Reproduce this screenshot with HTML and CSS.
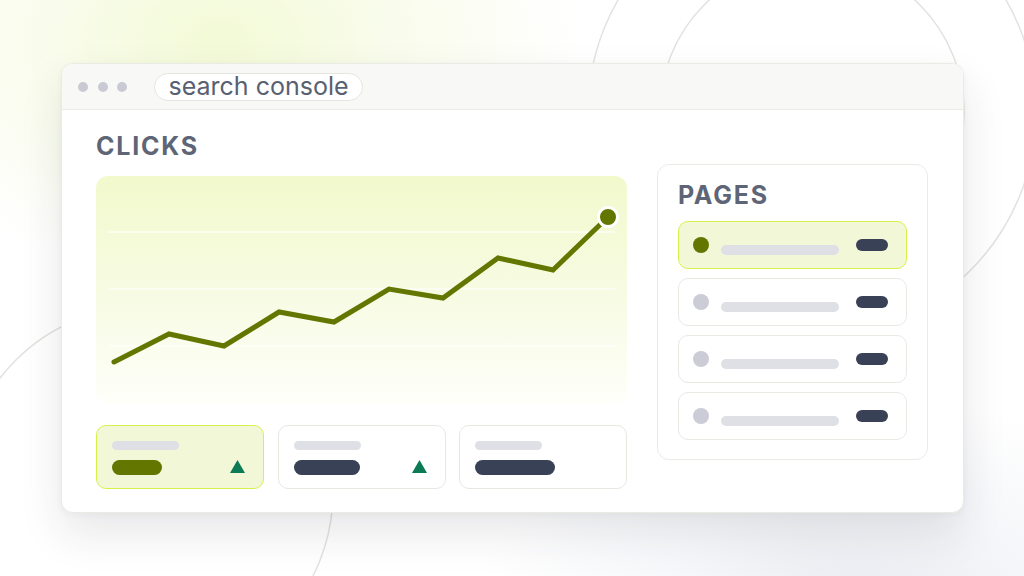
FILE: index.html
```html
<!DOCTYPE html>
<html lang="en">
<head>
<meta charset="utf-8">
<title>search console</title>
<link rel="stylesheet" href="styles.css">
</head>
<body>
<div class="stage">
  <svg class="rings" width="1024" height="576" viewBox="0 0 1024 576" aria-hidden="true">
    <circle cx="812" cy="112" r="224"/>
    <circle cx="812" cy="112" r="152"/>
    <circle cx="147" cy="492" r="186"/>
  </svg>
  <div class="window">
    <div class="titlebar">
      <div class="dots"><span class="dot"></span><span class="dot"></span><span class="dot"></span></div>
      <div class="address">search console</div>
    </div>
    <div class="content">
      <div class="main-col">
        <h2 class="heading">CLICKS</h2>
        <div class="chart">
          <svg width="531" height="227" viewBox="0 0 531 227">
            <line class="grid" x1="12" y1="56" x2="519" y2="56"/>
            <line class="grid" x1="12" y1="113" x2="519" y2="113"/>
            <line class="grid" x1="12" y1="170" x2="519" y2="170"/>
            <polyline class="trend" points="18,186 73,158 128,170 183,136 238,146 293,113 347,122 402,82 457,94 512,41"/>
            <circle class="end" cx="512" cy="41" r="9.5"/>
          </svg>
        </div>
        <div class="stats">
          <div class="stat stat-active">
            <span class="label-bar"></span>
            <div class="value-row">
              <span class="value value-olive" style="width:50px"></span>
              <svg class="up" width="15" height="13" viewBox="0 0 15 13"><polygon points="7.5,0 15,13 0,13"/></svg>
            </div>
          </div>
          <div class="stat">
            <span class="label-bar"></span>
            <div class="value-row">
              <span class="value" style="width:66px"></span>
              <svg class="up" width="15" height="13" viewBox="0 0 15 13"><polygon points="7.5,0 15,13 0,13"/></svg>
            </div>
          </div>
          <div class="stat">
            <span class="label-bar"></span>
            <div class="value-row">
              <span class="value" style="width:80px"></span>
            </div>
          </div>
        </div>
      </div>
      <div class="pages">
        <h2 class="heading">PAGES</h2>
        <div class="rows">
          <div class="row row-active"><span class="bullet"></span><span class="row-bar"></span><span class="row-pill"></span></div>
          <div class="row"><span class="bullet"></span><span class="row-bar"></span><span class="row-pill"></span></div>
          <div class="row"><span class="bullet"></span><span class="row-bar"></span><span class="row-pill"></span></div>
          <div class="row"><span class="bullet"></span><span class="row-bar"></span><span class="row-pill"></span></div>
        </div>
      </div>
    </div>
  </div>
</div>
</body>
</html>
```
FILE: styles.css
```css
* { box-sizing: border-box; }
html, body { margin: 0; padding: 0; }
body {
  width: 1024px;
  height: 576px;
  overflow: hidden;
  font-family: Inter, "Liberation Sans", sans-serif;
  background: #ffffff;
}
.stage {
  position: relative;
  width: 1024px;
  height: 576px;
  padding: 63px 60px 63px 61px;
  background:
    radial-gradient(ellipse 360px 240px at 220px 40px, rgba(243,250,214,1) 0%, rgba(246,251,226,0.7) 45%, rgba(255,255,255,0) 100%),
    radial-gradient(ellipse 380px 200px at 860px 600px, rgba(232,235,241,1) 0%, rgba(240,242,246,0.6) 50%, rgba(255,255,255,0) 100%),
    #ffffff;
}
.rings {
  position: absolute;
  left: 0;
  top: 0;
}
.rings circle {
  fill: none;
  stroke: #e2e3de;
  stroke-width: 1.5;
}
.window {
  position: relative;
  width: 903px;
  height: 450px;
  background: #ffffff;
  border: 1px solid #ebebe6;
  border-radius: 12px;
  box-shadow: 0 20px 44px rgba(34, 40, 58, 0.11), 0 2px 6px rgba(34, 40, 58, 0.04);
  overflow: hidden;
}
.titlebar {
  height: 46px;
  background: #f8f8f6;
  border-bottom: 1px solid #ebebe6;
  display: flex;
  align-items: center;
  padding-left: 16px;
}
.dots {
  display: flex;
  gap: 9.5px;
  margin-right: 27px;
}
.dot {
  width: 10px;
  height: 10px;
  border-radius: 50%;
  background: #c9cad3;
}
.address {
  height: 28px;
  padding: 0 13.5px;
  border: 1px solid #e5e5df;
  border-radius: 14px;
  background: #ffffff;
  font-size: 25px;
  line-height: 25px;
  color: #586071;
  white-space: nowrap;
}
.content {
  display: flex;
  align-items: flex-start;
  gap: 30px;
  padding: 21px 35px 23px 34px;
}
.main-col {
  width: 531px;
}
.heading {
  margin: 0;
  font-size: 25px;
  line-height: 30px;
  font-weight: 700;
  letter-spacing: 0.07em;
  color: #5e6576;
}
.chart {
  margin-top: 15px;
  height: 227px;
  border-radius: 12px;
  background: linear-gradient(to bottom, #f2f9cc 0%, #f7fbe2 50%, #fefff9 100%);
}
.chart svg { display: block; }
.grid {
  stroke: #ffffff;
  stroke-width: 1.5;
  opacity: 0.75;
}
.trend {
  fill: none;
  stroke: #627600;
  stroke-width: 5;
  stroke-linecap: round;
  stroke-linejoin: miter;
}
.end {
  fill: #627600;
  stroke: #ffffff;
  stroke-width: 3;
}
.stats {
  margin-top: 22px;
  display: grid;
  grid-template-columns: repeat(3, 168px);
  gap: 13.5px;
}
.stat {
  height: 64px;
  border: 1px solid #e8e8e3;
  border-radius: 10px;
  background: #ffffff;
  padding: 15px 18px 13px 15px;
}
.stat-active {
  background: #f2f8d7;
  border-color: #d9f04b;
}
.label-bar {
  display: block;
  width: 67px;
  height: 9px;
  border-radius: 5px;
  background: #dfe0e6;
}
.value-row {
  margin-top: 10px;
  height: 15px;
  display: flex;
  align-items: center;
  justify-content: space-between;
}
.value {
  display: block;
  height: 15px;
  border-radius: 8px;
  background: #394156;
}
.value-olive { background: #627600; }
.up {
  display: block;
  margin-top: -2px;
}
.up polygon { fill: #0b7a55; }
.pages {
  width: 271px;
  margin-top: 33px;
  border: 1px solid #ebebe6;
  border-radius: 12px;
  background: #ffffff;
  padding: 15px 20px 19px 20px;
}
.rows {
  margin-top: 11px;
  display: flex;
  flex-direction: column;
  gap: 9px;
}
.row {
  height: 48px;
  border: 1px solid #e9e9e4;
  border-radius: 10px;
  background: #ffffff;
  display: flex;
  align-items: center;
  padding: 0 18px 0 14px;
}
.row-active {
  background: #f2f8d7;
  border-color: #d9f04b;
}
.bullet {
  width: 16px;
  height: 16px;
  border-radius: 50%;
  background: #cbccd5;
  flex: none;
}
.row-active .bullet { background: #627600; }
.row-bar {
  width: 118px;
  height: 10px;
  margin-left: 12px;
  margin-top: 10px;
  border-radius: 5px;
  background: #dfe0e6;
  flex: none;
}
.row-pill {
  width: 32px;
  height: 12px;
  margin-left: auto;
  border-radius: 6px;
  background: #394156;
  flex: none;
}
```
